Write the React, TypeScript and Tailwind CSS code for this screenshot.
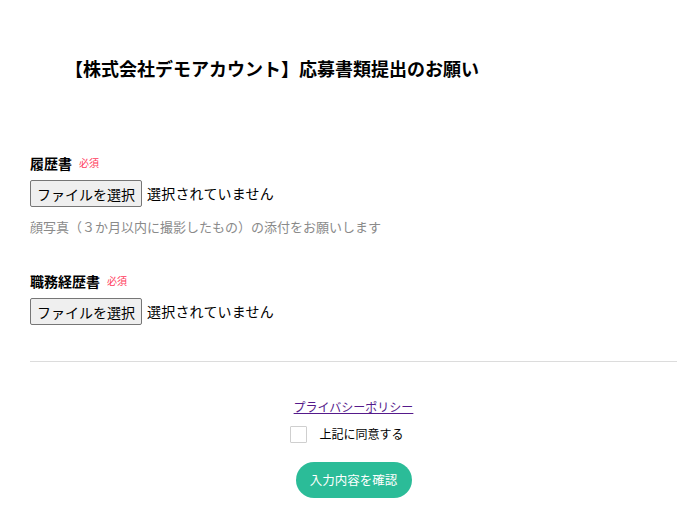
import React from 'react';

const font = { fontFamily: '"Noto Sans CJK JP", "Noto Sans", sans-serif' };

interface FileFieldProps {
  label: string;
  note?: string;
}

const FileField: React.FC<FileFieldProps> = ({ label, note }) => {
  return (
    <div>
      <div className="flex items-center h-[20px]">
        <span className="text-[14px] font-bold text-black leading-none">{label}</span>
        <span className="ml-[7px] text-[10px] text-[#ff3b5c] leading-none">必須</span>
      </div>
      <div className="mt-[7px] flex items-center">
        <div className="h-[27px] px-[6px] flex items-center border border-[#767676] bg-[#efefef] rounded-[2px] text-[14px] text-black leading-none">
          ファイルを選択
        </div>
        <span className="ml-[5px] text-[14px] text-black tracking-[0.2px]">選択されていません</span>
      </div>
      {note && (
        <p className="mt-[10px] text-[13px] text-[#8a8a8a] leading-[20px]">{note}</p>
      )}
    </div>
  );
};

const App: React.FC = () => {
  return (
    <div className="w-[699px] h-[524px] bg-white overflow-hidden" style={font}>
      <div className="ml-[30px] mr-[22px]">
        <h1 className="pt-[56px] pl-[35px] text-[18px] font-bold text-black leading-[24px]">
          【株式会社デモアカウント】応募書類提出のお願い
        </h1>

        <div className="mt-[73px]">
          <FileField label="履歴書" note="顔写真（３か月以内に撮影したもの）の添付をお願いします" />
        </div>

        <div className="mt-[34px]">
          <FileField label="職務経歴書" />
        </div>

        <div className="mt-[36px] border-t border-[#dcdcdc]" />

        <div className="flex flex-col items-center">
          <a href="#" className="mt-[37px] text-[12px] text-[#551a8b] underline leading-[16px]">
            プライバシーポリシー
          </a>
          <label className="mt-[10px] flex items-center mr-[13px]">
            <span className="w-[17px] h-[17px] border border-[#cfcfcf] bg-white rounded-[1px]" />
            <span className="ml-[12px] text-[12px] text-black">上記に同意する</span>
          </label>
          <button className="mt-[19px] w-[116px] h-[36px] rounded-full bg-[#2bbc98] text-white text-[12.5px]">
            入力内容を確認
          </button>
        </div>
      </div>
    </div>
  );
};

export default App;
